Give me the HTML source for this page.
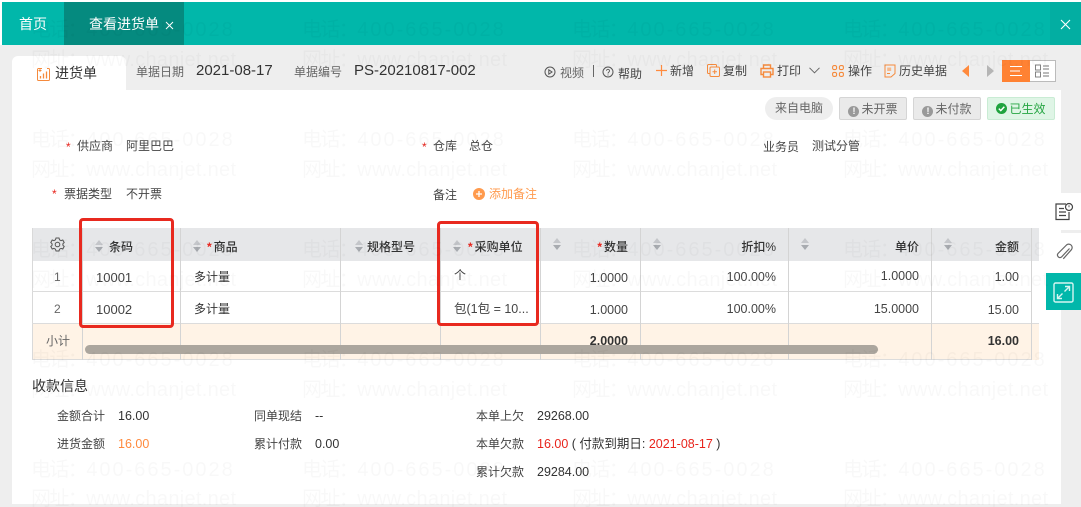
<!DOCTYPE html>
<html lang="zh"><head><meta charset="utf-8"><title>查看进货单</title>
<style>
html,body{margin:0;padding:0;width:1081px;height:507px;overflow:hidden;background:#fff}
body{position:relative;font-family:"Liberation Sans","Noto Sans CJK SC",sans-serif;font-size:12px;color:#333}
.a{position:absolute}
.t{position:absolute;white-space:nowrap;line-height:20px;height:20px}
.r{text-align:right}
.g{color:#666}
.red{color:#e8241c}
.o{color:#ff8a3d}
.b{font-weight:bold}
.h{font-weight:500;color:#333}
.h .red{font-weight:bold;margin-right:2px}
.n{font-size:12.5px}
.v{position:absolute;width:1px;top:228px;height:132px;background:#d4d4d4}
.l{position:absolute;left:32px;width:1000px;height:1px;background:#dcdcdc}
.wm{position:absolute;white-space:nowrap;font-size:20px;line-height:24px;letter-spacing:.3px;color:rgba(0,0,0,.028);pointer-events:none}
.wm i{font-style:normal;letter-spacing:-1.6px}
.wm b{font-weight:normal;letter-spacing:2px}
.badge{position:absolute;top:97px;height:23px;line-height:23px;text-align:center;box-sizing:border-box;font-size:12px;border-radius:2px}
.sort{position:absolute;width:8px;height:13px}
</style></head><body>

<div class="a" style="left:2px;top:2px;width:1079px;height:43px;background:#01b7aa"></div>
<div class="a" style="left:64px;top:2px;width:120px;height:43px;background:#058a7f"></div>
<div class="a" style="left:1050px;top:2px;width:31px;height:43px;background:#03aea2"></div>
<div class="t" style="left:19px;top:14px;color:#fff;font-size:14px">首页</div>
<div class="t" style="left:89px;top:14px;color:#fff;font-size:14px">查看进货单</div>
<svg class="a" style="left:165px;top:21px" width="9" height="9"><path d="M1 1L8 8M8 1L1 8" stroke="#fff" fill="none"/></svg>
<svg class="a" style="left:1060px;top:19px" width="11" height="11"><path d="M1 1L10 10M10 1L1 10" stroke="#fff" stroke-width="1.1" fill="none"/></svg>

<div class="a" style="left:0;top:45px;width:1081px;height:462px;background:#eee"></div>
<div class="a" style="left:12px;top:90px;width:1049px;height:414px;background:#fff"></div>
<div class="a" style="left:12px;top:56px;width:114px;height:34px;background:#fff;border-radius:6px 6px 0 0"></div>

<svg class="a" style="left:36px;top:67px" width="15" height="15" fill="none" stroke="#f58a3c"><path d="M6 1.500H2.500a1 1 0 0 0-1 1v10a1 1 0 0 0 1 1h10a1 1 0 0 0 1-1V2.500a1 1 0 0 0-1-1H11"/><path d="M4.500 11.500V9M7.500 11.500V6.500M10.500 11.500V4.500" stroke-width="1.300"/><path d="M2.500 3.500h3M4 2v3" stroke-width=".9"/></svg>
<div class="t" style="left:55px;top:63px;font-size:14px">进货单</div>
<div class="t g" style="left:136px;top:62px">单据日期</div>
<div class="t" style="left:196px;top:61px;font-size:15px">2021-08-17</div>
<div class="t g" style="left:294px;top:62px">单据编号</div>
<div class="t" style="left:354px;top:61px;font-size:15px">PS-20210817-002</div>

<svg class="a" style="left:544px;top:66px" width="12" height="12" fill="none" stroke="#555"><circle cx="6" cy="6" r="5"/><path d="M4.800 3.800L8 6L4.800 8.200Z"/></svg>
<div class="t g" style="left:560px;top:63px">视频</div>
<div class="a" style="left:593px;top:65px;width:1px;height:12px;background:#666"></div>
<svg class="a" style="left:602px;top:66px" width="12" height="12" fill="none" stroke="#555"><circle cx="6" cy="6" r="5"/><path d="M4.500 4.800a1.500 1.500 0 1 1 2.300 1.300C6.200 6.500 6 6.800 6 7.500M6 8.500v1" stroke-width=".9"/></svg>
<div class="t" style="left:618px;top:64px;color:#444">帮助</div>

<svg class="a" style="left:656px;top:65px" width="11" height="11"><path d="M5.500 0V11M0 5.500H11" stroke="#ff8a3d" stroke-width="1.200"/></svg>
<div class="t" style="left:670px;top:61px;color:#444">新增</div>
<svg class="a" style="left:707px;top:64px" width="13" height="13" fill="none" stroke="#f58a3c"><path d="M2.500 9.500H1.500a1 1 0 0 1-1-1V1.500a1 1 0 0 1 1-1h7a1 1 0 0 1 1 1V2.500" /><rect x="3" y="3" width="9.500" height="9.500" rx="1.200"/><path d="M7.700 5.500v4.500M5.500 7.700h4.500"/></svg>
<div class="t" style="left:723px;top:61px;color:#444">复制</div>
<svg class="a" style="left:760px;top:64px" width="14" height="14" fill="none" stroke="#f58a3c" stroke-width="1.400"><path d="M3.500 4V1h7v3M3.500 10.500H1V4.500h12v6h-2.500"/><rect x="3.500" y="8" width="7" height="5"/></svg>
<div class="t" style="left:777px;top:61px;color:#444">打印</div>
<svg class="a" style="left:809px;top:67px" width="11" height="7"><path d="M.5 .8L5.500 5.800L10.500 .8" stroke="#666" fill="none"/></svg>
<svg class="a" style="left:832px;top:65px" width="12" height="12" fill="none" stroke="#f58a3c" stroke-width="1.100"><rect x=".6" y=".6" width="4" height="4" rx="1.500"/><rect x="7.400" y=".6" width="4" height="4" rx="1.500"/><rect x=".6" y="7.400" width="4" height="4" rx="1.500"/><rect x="7.400" y="7.400" width="4" height="4" rx="1.500"/></svg>
<div class="t" style="left:848px;top:61px;color:#444">操作</div>
<svg class="a" style="left:884px;top:64px" width="12" height="14" fill="none" stroke="#f58a3c"><path d="M1 1h10v8.500L7 13H1Z"/><rect x="3.200" y="3.500" width="4" height="3.500" fill="#f8b98c" stroke="none"/><path d="M3 9.500h3"/></svg>
<div class="t" style="left:899px;top:61px;color:#444">历史单据</div>
<svg class="a" style="left:962px;top:65px" width="8" height="12"><path d="M7 0V12L0 6Z" fill="#ff8a3d"/></svg>
<svg class="a" style="left:986px;top:65px" width="8" height="12"><path d="M1 0V12L8 6Z" fill="#b5b5b5"/></svg>
<div class="a" style="left:1002px;top:60px;width:54px;height:22px;box-sizing:border-box;border:1px solid #bbb;background:#fff"></div>
<div class="a" style="left:1002px;top:60px;width:28px;height:22px;background:#ff8233"></div>
<svg class="a" style="left:1009px;top:64px" width="14" height="14"><path d="M1 2.500H13M1 7H11M1 11.500H13" stroke="#fff" stroke-width="1"/></svg>
<svg class="a" style="left:1035px;top:64px" width="16" height="14" fill="none" stroke="#777" stroke-width=".9"><rect x=".5" y="1" width="5" height="5"/><rect x=".5" y="8" width="5" height="5"/><path d="M8 2H14M8 5H14M8 9H14M8 12H14"/></svg>

<div class="badge g" style="left:765px;width:68px;background:#eee;border-radius:12px">来自电脑</div>
<div class="badge g" style="left:839px;width:68px;background:#eaeaea;border:1px solid #d5d5d5"><span style="display:inline-block;width:11px;height:11px;line-height:11px;border-radius:50%;background:#999;color:#fff;font-size:9px;font-weight:bold;vertical-align:-1px;margin-right:2px">!</span>未开票</div>
<div class="badge g" style="left:913px;width:68px;background:#eaeaea;border:1px solid #d5d5d5"><span style="display:inline-block;width:11px;height:11px;line-height:11px;border-radius:50%;background:#999;color:#fff;font-size:9px;font-weight:bold;vertical-align:-1px;margin-right:2px">!</span>未付款</div>
<div class="badge" style="left:987px;width:68px;background:#dff5e6;border:1px solid #c9ecd4;color:#27a644"><svg width="11" height="11" style="vertical-align:-1px;margin-right:2px"><circle cx="5.500" cy="5.500" r="5.500" fill="#1fa33e"/><path d="M2.800 5.600L4.800 7.600L8.300 3.800" stroke="#fff" stroke-width="1.500" fill="none"/></svg>已生效</div>

<div class="t red" style="left:66px;top:137px">*</div>
<div class="t" style="left:77px;top:136px;color:#444">供应商</div>
<div class="t" style="left:126px;top:136px;color:#444">阿里巴巴</div>
<div class="t red" style="left:422px;top:137px">*</div>
<div class="t" style="left:433px;top:136px;color:#444">仓库</div>
<div class="t" style="left:469px;top:136px;color:#444">总仓</div>
<div class="t" style="left:763px;top:137px;color:#444">业务员</div>
<div class="t" style="left:812px;top:136px;color:#444">测试分管</div>

<div class="t red" style="left:52px;top:184px">*</div>
<div class="t" style="left:64px;top:184px;color:#444">票据类型</div>
<div class="t" style="left:126px;top:184px;color:#444">不开票</div>
<div class="t" style="left:433px;top:185px;color:#444">备注</div>
<div class="a" style="left:473px;top:188px;width:12px;height:12px;border-radius:50%;background:#ff9a4d"></div>
<svg class="a" style="left:473px;top:188px" width="12" height="12"><path d="M6 3V9M3 6H9" stroke="#fff" stroke-width="1.300"/></svg>
<div class="t" style="left:489px;top:184px;color:#ff9a4d">添加备注</div>

<div class="a" style="left:32px;top:228px;width:1007px;height:33px;background:#e6e7e9"></div>
<div class="a" style="left:32px;top:324px;width:1007px;height:36px;background:#fff3e6"></div>
<div class="a" style="left:32px;top:228px;width:1px;height:132px;background:#d9d9d9"></div>
<div class="l" style="top:291px"></div>
<div class="l" style="top:323px;width:1007px"></div>
<div class="l" style="top:359px"></div>
<div class="v" style="left:82px"></div><div class="v" style="left:180px"></div><div class="v" style="left:340px"></div><div class="v" style="left:440px"></div><div class="v" style="left:540px"></div><div class="v" style="left:640px"></div><div class="v" style="left:788px"></div><div class="v" style="left:931px"></div><div class="v" style="left:1031px"></div>

<svg class="a" style="left:50px;top:237px" width="15" height="15" fill="none" stroke="#555"><path d="M6 1h3l.5 1.800 1.500.8 1.800-.6 1.400 2.500-1.300 1.300v1.400l1.300 1.300-1.400 2.500-1.800-.6-1.500.8L9 14H6l-.5-1.800-1.500-.8-1.800.6L.8 9.500 2.100 8.200V6.800L.8 5.500 2.200 3l1.800.6 1.500-.8Z"/><circle cx="7.500" cy="7.500" r="2.300"/></svg>

<svg width="0" height="0" style="position:absolute"><defs><g id="s"><path d="M4 0L8 5H0Z" fill="#c4c6ca"/><path d="M4 12L8 7H0Z" fill="#a8abb0"/></g></defs></svg>
<svg class="sort" style="left:95px;top:240px"><use href="#s"/></svg>
<svg class="sort" style="left:193px;top:240px"><use href="#s"/></svg>
<svg class="sort" style="left:355px;top:240px"><use href="#s"/></svg>
<svg class="sort" style="left:453px;top:240px"><use href="#s"/></svg>
<svg class="sort" style="left:553px;top:238px"><use href="#s"/></svg>
<svg class="sort" style="left:653px;top:238px"><use href="#s"/></svg>
<svg class="sort" style="left:801px;top:238px"><use href="#s"/></svg>
<svg class="sort" style="left:944px;top:238px"><use href="#s"/></svg>

<div class="t h" style="left:109px;top:237px">条码</div>
<div class="t h" style="left:207px;top:237px"><span class="red">*</span>商品</div>
<div class="t h" style="left:367px;top:237px">规格型号</div>
<div class="t h" style="left:468px;top:237px"><span class="red">*</span>采购单位</div>
<div class="t h r" style="left:560px;top:237px;width:68px"><span class="red">*</span>数量</div>
<div class="t h r" style="left:700px;top:237px;width:76px">折扣%</div>
<div class="t h r" style="left:840px;top:237px;width:79px">单价</div>
<div class="t h r" style="left:960px;top:237px;width:59px">金额</div>

<div class="t g" style="left:54px;top:267px">1</div>
<div class="t" style="left:96px;top:268px;color:#444;font-size:13px">10001</div>
<div class="t" style="left:194px;top:267px">多计量</div>
<div class="t" style="left:454px;top:265px;color:#444">个</div>
<div class="t r n" style="left:560px;top:268px;width:68px;color:#444">1.0000</div>
<div class="t r n" style="left:700px;top:267px;width:76px;color:#444">100.00%</div>
<div class="t r n" style="left:840px;top:266px;width:79px;color:#444">1.0000</div>
<div class="t r n" style="left:960px;top:267px;width:59px;color:#444">1.00</div>

<div class="t g" style="left:54px;top:299px">2</div>
<div class="t" style="left:96px;top:300px;color:#444;font-size:13px">10002</div>
<div class="t" style="left:194px;top:299px">多计量</div>
<div class="t" style="left:454px;top:299px;color:#444;font-size:12.5px">包(1包 = 10...</div>
<div class="t r n" style="left:560px;top:300px;width:68px;color:#444">1.0000</div>
<div class="t r n" style="left:700px;top:299px;width:76px;color:#444">100.00%</div>
<div class="t r n" style="left:840px;top:299px;width:79px;color:#444">15.0000</div>
<div class="t r n" style="left:960px;top:300px;width:59px;color:#444">15.00</div>

<div class="t g" style="left:46px;top:331px">小计</div>
<div class="t r b n" style="left:560px;top:331px;width:68px">2.0000</div>
<div class="t r b n" style="left:960px;top:331px;width:59px">16.00</div>

<div class="a" style="left:85px;top:345px;width:793px;height:9px;background:#aca69e;border-radius:5px"></div>

<div class="a" style="left:79px;top:218px;width:95px;height:110px;box-sizing:border-box;border:3px solid #e8291f;border-radius:4px"></div>
<div class="a" style="left:437px;top:221px;width:102px;height:105px;box-sizing:border-box;border:3px solid #e8291f;border-radius:4px"></div>

<div class="a" style="left:1046px;top:193px;width:35px;height:37px;background:#fff"></div>
<svg class="a" style="left:1054px;top:202px" width="20" height="20" fill="none" stroke="#444" stroke-width="1.200"><path d="M12 2H2v15.500h13V10"/><path d="M5 6.500h5M5 10h7M5 13.500h7"/><circle cx="15" cy="5" r="3.500"/><path d="M15 3.200V5.200" stroke-width=".9"/></svg>
<div class="a" style="left:1046px;top:233px;width:35px;height:40px;background:#fff"></div>
<svg class="a" style="left:1055px;top:242px" width="18" height="20" fill="none" stroke="#666" stroke-width="1.200"><path d="M14.500 6.500L6.500 15a2.500 2.500 0 0 1-3.500-3.500L11.500 3a3.400 3.400 0 0 1 4.800 4.800l-8 9"/></svg>
<div class="a" style="left:1046px;top:273px;width:35px;height:37px;background:#01b7aa"></div>
<svg class="a" style="left:1053px;top:282px" width="21" height="21" fill="none" stroke="#d6f5f1" stroke-width="1.400"><rect x="1" y="1" width="19" height="19" rx="1.500"/><path d="M12 4.500H16.500V9M16.500 4.500L11.500 9.500M9 16.500H4.500V12M4.500 16.500L9.500 11.500"/></svg>

<div class="t" style="left:32px;top:376px;font-size:14px">收款信息</div>
<div class="t" style="left:57px;top:406px;color:#444">金额合计</div>
<div class="t n" style="left:118px;top:406px">16.00</div>
<div class="t" style="left:57px;top:434px;color:#444">进货金额</div>
<div class="t o n" style="left:118px;top:434px">16.00</div>
<div class="t" style="left:254px;top:406px;color:#444">同单现结</div>
<div class="t n" style="left:315px;top:406px">--</div>
<div class="t" style="left:254px;top:434px;color:#444">累计付款</div>
<div class="t n" style="left:315px;top:434px">0.00</div>
<div class="t" style="left:476px;top:406px;color:#444">本单上欠</div>
<div class="t n" style="left:537px;top:406px">29268.00</div>
<div class="t" style="left:476px;top:434px;color:#444">本单欠款</div>
<div class="t n" style="left:537px;top:434px"><span class="red">16.00</span> ( 付款到期日: <span class="red">2021-08-17</span> )</div>
<div class="t" style="left:476px;top:462px;color:#444">累计欠款</div>
<div class="t n" style="left:537px;top:462px">29284.00</div>

<div class="wm" style="left:31px;top:18px"><i>电话：</i><b>400-665-0028</b></div>
<div class="wm" style="left:302px;top:18px"><i>电话：</i><b>400-665-0028</b></div>
<div class="wm" style="left:572px;top:18px"><i>电话：</i><b>400-665-0028</b></div>
<div class="wm" style="left:843px;top:18px"><i>电话：</i><b>400-665-0028</b></div>
<div class="wm" style="left:31px;top:48px"><i>网址：</i>www.chanjet.net</div>
<div class="wm" style="left:302px;top:48px"><i>网址：</i>www.chanjet.net</div>
<div class="wm" style="left:572px;top:48px"><i>网址：</i>www.chanjet.net</div>
<div class="wm" style="left:843px;top:48px"><i>网址：</i>www.chanjet.net</div>
<div class="wm" style="left:31px;top:128px"><i>电话：</i><b>400-665-0028</b></div>
<div class="wm" style="left:302px;top:128px"><i>电话：</i><b>400-665-0028</b></div>
<div class="wm" style="left:572px;top:128px"><i>电话：</i><b>400-665-0028</b></div>
<div class="wm" style="left:843px;top:128px"><i>电话：</i><b>400-665-0028</b></div>
<div class="wm" style="left:31px;top:158px"><i>网址：</i>www.chanjet.net</div>
<div class="wm" style="left:302px;top:158px"><i>网址：</i>www.chanjet.net</div>
<div class="wm" style="left:572px;top:158px"><i>网址：</i>www.chanjet.net</div>
<div class="wm" style="left:843px;top:158px"><i>网址：</i>www.chanjet.net</div>
<div class="wm" style="left:31px;top:238px"><i>电话：</i><b>400-665-0028</b></div>
<div class="wm" style="left:302px;top:238px"><i>电话：</i><b>400-665-0028</b></div>
<div class="wm" style="left:572px;top:238px"><i>电话：</i><b>400-665-0028</b></div>
<div class="wm" style="left:843px;top:238px"><i>电话：</i><b>400-665-0028</b></div>
<div class="wm" style="left:31px;top:268px"><i>网址：</i>www.chanjet.net</div>
<div class="wm" style="left:302px;top:268px"><i>网址：</i>www.chanjet.net</div>
<div class="wm" style="left:572px;top:268px"><i>网址：</i>www.chanjet.net</div>
<div class="wm" style="left:843px;top:268px"><i>网址：</i>www.chanjet.net</div>
<div class="wm" style="left:31px;top:348px"><i>电话：</i><b>400-665-0028</b></div>
<div class="wm" style="left:302px;top:348px"><i>电话：</i><b>400-665-0028</b></div>
<div class="wm" style="left:572px;top:348px"><i>电话：</i><b>400-665-0028</b></div>
<div class="wm" style="left:843px;top:348px"><i>电话：</i><b>400-665-0028</b></div>
<div class="wm" style="left:31px;top:378px"><i>网址：</i>www.chanjet.net</div>
<div class="wm" style="left:302px;top:378px"><i>网址：</i>www.chanjet.net</div>
<div class="wm" style="left:572px;top:378px"><i>网址：</i>www.chanjet.net</div>
<div class="wm" style="left:843px;top:378px"><i>网址：</i>www.chanjet.net</div>
<div class="wm" style="left:31px;top:458px"><i>电话：</i><b>400-665-0028</b></div>
<div class="wm" style="left:302px;top:458px"><i>电话：</i><b>400-665-0028</b></div>
<div class="wm" style="left:572px;top:458px"><i>电话：</i><b>400-665-0028</b></div>
<div class="wm" style="left:843px;top:458px"><i>电话：</i><b>400-665-0028</b></div>
<div class="wm" style="left:31px;top:487px"><i>网址：</i>www.chanjet.net</div>
<div class="wm" style="left:302px;top:487px"><i>网址：</i>www.chanjet.net</div>
<div class="wm" style="left:572px;top:487px"><i>网址：</i>www.chanjet.net</div>
<div class="wm" style="left:843px;top:487px"><i>网址：</i>www.chanjet.net</div>

</body></html>
